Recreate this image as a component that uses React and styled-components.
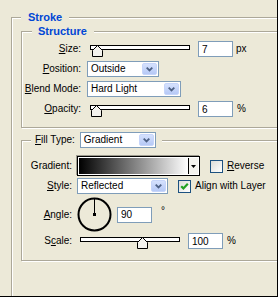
import React from 'react';
import styled, { createGlobalStyle } from 'styled-components';

const Global = createGlobalStyle`
  html, body { margin: 0; padding: 0; background: #ECE9D8; }
  body { font-family: "Liberation Sans", Arial, sans-serif; }
`;

const Window = styled.div`
  width: 278px;
  height: 297px;
  box-sizing: border-box;
  background: #ECE9D8;
  border-right: 1px solid #000;
  border-bottom: 1px solid #000;
  overflow: hidden;
  padding-top: 11px;
  font-family: "Liberation Sans", Arial, sans-serif;
  font-size: 10px;
  color: #000;
`;

const Fieldset = styled.fieldset`
  box-sizing: border-box;
  margin: 0;
  min-width: 0;
  border: 1px solid #ACA899;
  box-shadow: inset 1px 1px 0 #fff, 1px 1px 0 #fff;
`;

const OuterGroup = styled(Fieldset)`
  margin-left: 11px;
  width: 330px;
  min-height: 330px;
  padding: 1px 0 0 9px;
`;

const InnerGroup = styled(Fieldset)`
  margin-top: ${p => p.$mt || 0}px;
  padding: 0;
`;

const Title = styled.legend`
  margin-left: ${p => p.$ml}px;
  padding: 0 7px 0 ${p => p.$pl}px;
  background: #ECE9D8;
  color: #0046D5;
  font: bold 11px/13px "Liberation Sans", Arial, sans-serif;
`;

const ControlLegend = styled.legend`
  margin-left: 9px;
  padding: 0 6px 0 4px;
  background: #ECE9D8;
  display: flex;
  align-items: center;
  height: 16px;
`;

const Body = styled.div`
  display: flex;
  flex-direction: column;
  padding: ${p => p.$pt}px 0 ${p => p.$pb}px 0;
`;

const Row = styled.div`
  display: flex;
  align-items: center;
  height: ${p => p.$h || 16}px;
  margin-top: ${p => p.$mt || 0}px;
`;

const Label = styled.span`
  flex: none;
  width: ${p => (p.$w ? `${p.$w}px` : 'auto')};
  margin-right: ${p => p.$gap}px;
  text-align: right;
  white-space: nowrap;
  line-height: 12px;
`;

const Mn = styled.span`
  text-decoration: underline;
  text-underline-offset: 1px;
`;

const SelectBox = styled.div`
  flex: none;
  width: ${p => p.$w}px;
  height: 16px;
  box-sizing: border-box;
  border: 1px solid #7F9DB9;
  background: #fff;
  padding: 1px;
  display: flex;
  align-items: center;
`;

const SelectValue = styled.span`
  flex: 1;
  padding-left: 2px;
  line-height: 12px;
  white-space: nowrap;
  overflow: hidden;
`;

const ComboButton = styled.span`
  flex: none;
  width: 15px;
  height: 12px;
  box-sizing: border-box;
  border: 1px solid #C6D5FA;
  border-radius: 2px;
  background: linear-gradient(#D5E1FD, #B6C9F6);
  display: flex;
  align-items: center;
  justify-content: center;
`;

const NumField = styled.input`
  flex: none;
  width: 35px;
  height: 16px;
  box-sizing: border-box;
  border: 1px solid #7F9DB9;
  background: #fff;
  padding: 0 3px;
  margin: 0;
  font: 10px "Liberation Sans", Arial, sans-serif;
  color: #000;
  outline: none;
`;

const Unit = styled.span`
  margin-left: ${p => p.$ml}px;
  align-self: ${p => (p.$top ? 'flex-start' : 'center')};
  margin-top: ${p => p.$mtop || 0}px;
  line-height: 12px;
`;

const SliderWrap = styled.div`
  position: relative;
  flex: none;
  width: 100px;
  height: 16px;
  margin: 0 8px 0 3px;
`;

const Track = styled.div`
  margin-top: 4px;
  height: 5px;
  box-sizing: border-box;
  border: 1px solid #000;
  background: #fff;
`;

const Thumb = styled.svg`
  position: absolute;
  top: 4px;
  left: ${p => p.$left}px;
`;

const GradientFrame = styled.div`
  flex: none;
  width: 123px;
  height: 20px;
  box-sizing: border-box;
  border: 1px solid #000;
  box-shadow: -1px -1px 0 #9C9A8E;
  background: #fff;
  padding: 1px;
  display: flex;
`;

const GradientSwatch = styled.div`
  flex: 1;
  background: linear-gradient(to right, #000, #fff);
`;

const GradientArrow = styled.div`
  flex: none;
  width: 9px;
  border-left: 1px solid #000;
  background: #F4F3EE;
  display: flex;
  align-items: center;
  justify-content: center;
`;

const CheckWrap = styled.label`
  display: flex;
  align-items: center;
  margin-left: 10px;
`;

const CheckBox = styled.span`
  flex: none;
  width: 13px;
  height: 13px;
  box-sizing: border-box;
  border: 1px solid #1C5180;
  background: linear-gradient(135deg, #DCDCD7, #fff);
  display: flex;
  align-items: center;
  justify-content: center;
  margin-right: 4px;
`;

const CheckText = styled.span`
  line-height: 12px;
  white-space: nowrap;
`;

const Dial = styled.svg`
  flex: none;
  margin-right: 5px;
`;

function Chevron() {
  return (
    <svg width="7" height="5" viewBox="0 0 7 5">
      <path d="M0.7 0.7 L3.5 3.5 L6.3 0.7" fill="none" stroke="#4D6185" strokeWidth="1.8" />
    </svg>
  );
}

function Dropdown({ width, value }) {
  return (
    <SelectBox $w={width}>
      <SelectValue>{value}</SelectValue>
      <ComboButton><Chevron /></ComboButton>
    </SelectBox>
  );
}

function Slider({ left }) {
  return (
    <SliderWrap>
      <Track />
      <Thumb $left={left} width="11" height="12" viewBox="0 0 11 12">
        <path d="M0.5 11.5 L0.5 5.5 L5.5 0.5 L10.5 5.5 L10.5 11.5 Z" fill="#F4F3EE" stroke="#000" strokeWidth="1" />
      </Thumb>
    </SliderWrap>
  );
}

function Check({ checked, children }) {
  return (
    <CheckWrap>
      <CheckBox>
        {checked && (
          <svg width="9" height="9" viewBox="0 0 9 9">
            <path d="M1.2 4.2 L3.4 6.4 L7.8 1.8" fill="none" stroke="#21A121" strokeWidth="2.2" />
          </svg>
        )}
      </CheckBox>
      <CheckText>{children}</CheckText>
    </CheckWrap>
  );
}

export default function App() {
  return (
    <>
      <Global />
      <Window>
        <OuterGroup>
          <Title $ml={0} $pl={7}>Stroke</Title>
          <InnerGroup>
            <Title $ml={10} $pl={6}>Structure</Title>
            <Body $pt={3} $pb={10}>
              <Row>
                <Label $w={59} $gap={6}><Mn>S</Mn>ize:</Label>
                <Slider left={2} />
                <NumField readOnly value="7" />
                <Unit $ml={3}>px</Unit>
              </Row>
              <Row $mt={4}>
                <Label $w={59} $gap={6}><Mn>P</Mn>osition:</Label>
                <Dropdown width={72} value="Outside" />
              </Row>
              <Row $mt={4}>
                <Label $w={59} $gap={6}><Mn>B</Mn>lend Mode:</Label>
                <Dropdown width={94} value="Hard Light" />
              </Row>
              <Row $mt={4}>
                <Label $w={59} $gap={6}><Mn>O</Mn>pacity:</Label>
                <Slider left={1} />
                <NumField readOnly value="6" />
                <Unit $ml={4}>%</Unit>
              </Row>
            </Body>
          </InnerGroup>
          <InnerGroup $mt={4}>
            <ControlLegend>
              <Label $gap={5}><Mn>F</Mn>ill Type:</Label>
              <Dropdown width={76} value="Gradient" />
            </ControlLegend>
            <Body $pt={8} $pb={11}>
              <Row $h={20}>
                <Label $w={50} $gap={5}>Gradient:</Label>
                <GradientFrame>
                  <GradientSwatch />
                  <GradientArrow>
                    <svg width="5" height="3" viewBox="0 0 5 3">
                      <path d="M0 0 L5 0 L2.5 3 Z" fill="#000" />
                    </svg>
                  </GradientArrow>
                </GradientFrame>
                <Check><Mn>R</Mn>everse</Check>
              </Row>
              <Row $mt={2}>
                <Label $w={50} $gap={5}><Mn>S</Mn>tyle:</Label>
                <Dropdown width={91} value="Reflected" />
                <Check checked>Align with Layer</Check>
              </Row>
              <Row $h={35} $mt={3}>
                <Label $w={50} $gap={5}><Mn>A</Mn>ngle:</Label>
                <Dial width="35" height="35" viewBox="0 0 35 35">
                  <circle cx="17.5" cy="17.5" r="16" fill="none" stroke="#000" strokeWidth="2" />
                  <line x1="17.5" y1="17.5" x2="17.5" y2="2" stroke="#000" strokeWidth="1" />
                  <rect x="16" y="16" width="3" height="3" fill="#000" />
                </Dial>
                <NumField readOnly value="90" />
                <Unit $ml={9} $top $mtop={8}>°</Unit>
              </Row>
              <Row $mt={1}>
                <Label $w={50} $gap={5}>S<Mn>c</Mn>ale:</Label>
                <Slider left={57} />
                <NumField readOnly value="100" />
                <Unit $ml={4}>%</Unit>
              </Row>
            </Body>
          </InnerGroup>
        </OuterGroup>
      </Window>
    </>
  );
}
